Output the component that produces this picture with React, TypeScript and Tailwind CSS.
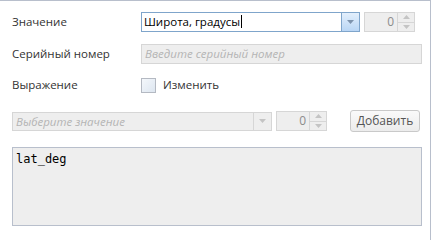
import { useState } from "react";

function Arrow({ up, color = "#8a9bb0" }: { up?: boolean; color?: string }) {
  return (
    <svg width="7" height="4" viewBox="0 0 7 4">
      {up ? <path d="M0 4 L3.5 0 L7 4 Z" fill={color} /> : <path d="M0 0 L7 0 L3.5 4 Z" fill={color} />}
    </svg>
  );
}

function Spinner({ value }: { value: string }) {
  return (
    <div className="flex h-[20px] w-[51px] border border-[#d6d6d6] bg-[#eeeeee]">
      <div className="flex-1 pr-[3px] text-right text-[12px] leading-[18px] text-[#8c8c8c]">{value}</div>
      <div className="flex w-[17px] flex-col border-l border-[#d6d6d6]">
        <div className="flex flex-1 items-center justify-center border-b border-[#d6d6d6]">
          <Arrow up color="#c4c4c4" />
        </div>
        <div className="flex flex-1 items-center justify-center">
          <Arrow color="#c4c4c4" />
        </div>
      </div>
    </div>
  );
}

export default function App() {
  const [checked, setChecked] = useState(false);

  return (
    <div className="h-[240px] w-[431px] border-r border-t border-[#b8bfcc] bg-white pl-[12px] pr-[8px] pt-[11px] font-['Open_Sans',sans-serif] text-[11.5px] text-[#333333]">
      <div className="flex h-[20px] items-center">
        <div className="w-[129px]">Значение</div>
        <div className="flex h-[20px] w-[219px] border border-[#7fa5cb] bg-white">
          <div className="flex-1 pl-[2px] leading-[18px] text-black">
            Широта, градусы<span className="ml-px inline-block h-[13px] w-px translate-y-[2px] bg-black" />
          </div>
          <div className="flex w-[18px] items-center justify-center border-l border-[#7fa5cb] bg-gradient-to-b from-[#e3effc] to-[#b9d6f5]">
            <Arrow color="#7d93ad" />
          </div>
        </div>
        <div className="ml-[4px]">
          <Spinner value="0" />
        </div>
      </div>

      <div className="mt-[12px] flex h-[20px] items-center">
        <div className="w-[129px]">Серийный номер</div>
        <div className="h-[20px] flex-1 border border-[#d6d6d6] bg-[#eeeeee] pl-[3px] italic leading-[18px] text-[#b4b4b4]">
          Введите серийный номер
        </div>
      </div>

      <div className="mt-[11px] flex h-[20px] items-center">
        <div className="w-[129px]">Выражение</div>
        <label className="flex items-center gap-[7px]">
          <input
            type="checkbox"
            className="h-[15px] w-[15px] appearance-none border border-[#b4b9c2] bg-gradient-to-br from-[#f4f7fb] to-[#dde6f0]"
            checked={checked}
            onChange={() => setChecked(!checked)}
          />
          <span>Изменить</span>
        </label>
      </div>

      <div className="mt-[15px] flex h-[22px] items-center">
        <div className="flex h-[19px] w-[260px] border border-[#d6d6d6] bg-[#eeeeee]">
          <div className="flex-1 pl-[3px] italic leading-[17px] text-[#b4b4b4]">Выберите значение</div>
          <div className="flex w-[18px] items-center justify-center border-l border-[#d6d6d6]">
            <Arrow color="#c4c4c4" />
          </div>
        </div>
        <div className="ml-[4px]">
          <Spinner value="0" />
        </div>
        <button className="ml-[23px] h-[22px] w-[70px] rounded-[3px] border border-[#c9c9c9] bg-gradient-to-b from-[#fafafa] to-[#ececec] text-[12px] text-[#555555]">
          Добавить
        </button>
      </div>

      <textarea
        readOnly
        value="lat_deg"
        className="mt-[15px] block h-[79px] w-[410px] resize-none border border-[#b8bfcc] bg-[#eeeeee] px-[3px] py-[3px] font-['DejaVu_Sans_Mono',monospace] text-[12px] leading-[16px] text-black outline-none"
      />
    </div>
  );
}
